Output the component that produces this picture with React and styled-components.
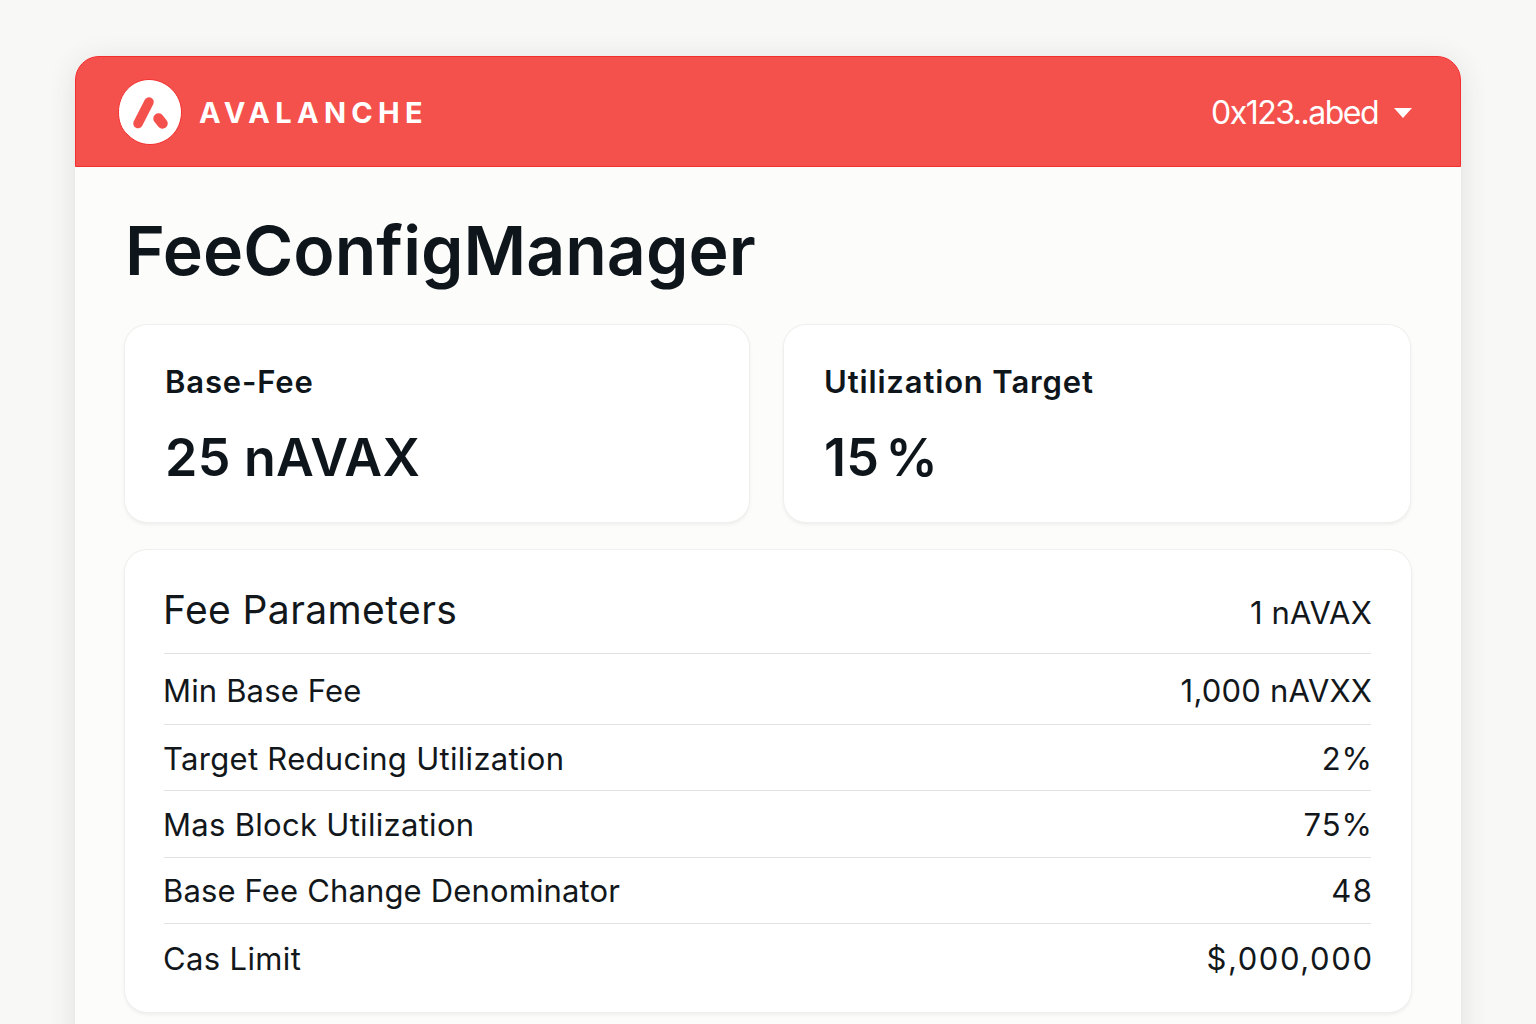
import styled, { createGlobalStyle } from 'styled-components';

const GlobalStyle = createGlobalStyle`
  html, body {
    margin: 0;
    height: 1024px;
    overflow: hidden;
    background: #f8f8f6;
    font-family: Inter, "Liberation Sans", sans-serif;
    color: #0f161b;
  }
`;

const Page = styled.div`
  padding: 56px 75px 0;
  height: 1024px;
  box-sizing: border-box;
  overflow: hidden;
`;
const Shell = styled.main`
  background: #fcfcfb;
  border-radius: 24px 24px 0 0;
  box-shadow: 0 4px 28px rgba(60, 60, 60, 0.13);
  height: 1100px;
`;
const Header = styled.header`
  height: 111px;
  box-sizing: border-box;
  background: #f4514c;
  border: 1px solid #f42f2f;
  border-radius: 24px 24px 0 0;
  display: flex;
  align-items: center;
  justify-content: space-between;
  padding: 0 48px 0 42px;
`;
const Brand = styled.div`
  display: flex;
  align-items: center;
  gap: 17px;
`;
const BrandName = styled.span`
  color: #fff;
  font-size: 29px;
  font-weight: 700;
  letter-spacing: 5.3px;
  padding-top: 2px;
`;
const Wallet = styled.div`
  display: flex;
  align-items: center;
  gap: 16px;
  color: #fff;
  font-size: 32px;
  letter-spacing: -1.5px;
  padding-top: 2px;
`;
const Caret = styled.span`
  width: 0;
  height: 0;
  border-left: 9px solid transparent;
  border-right: 9px solid transparent;
  border-top: 10px solid #fff;
`;
const Content = styled.div`
  padding: 41px 50px 0;
`;
const Title = styled.h1`
  margin: 0 0 33px;
  font-size: 68px;
  line-height: 84px;
  font-weight: 600;
  letter-spacing: 0;
`;
const Stats = styled.div`
  display: grid;
  grid-template-columns: 624px 626px;
  gap: 35px;
  margin-bottom: 28px;
`;
const Card = styled.section`
  background: #fff;
  border-radius: 22px;
  box-shadow: 0 0 0 1px #efefee, 0 2px 4px rgba(0, 0, 0, 0.08);
`;
const StatCard = styled(Card)`
  height: 197px;
  box-sizing: border-box;
  padding: 36px 40px 0;
`;
const StatLabel = styled.div`
  font-size: 31px;
  line-height: 42px;
  font-weight: 600;
  letter-spacing: 0.85px;
  margin-bottom: 24px;
`;
const StatValue = styled.div`
  font-size: 52px;
  line-height: 62px;
  font-weight: 600;
  letter-spacing: 0.25px;
  word-spacing: ${(p) => (p.$tight ? '-7px' : '0')};
`;
const Panel = styled(Card)`
  height: 462px;
  box-sizing: border-box;
  padding: 0 40px 0 39px;
`;
const Row = styled.div`
  display: flex;
  align-items: center;
  justify-content: space-between;
  height: ${(p) => p.$height}px;
  box-sizing: border-box;
  padding-top: ${(p) => p.$top || 0}px;
  border-bottom: ${(p) => (p.$last ? 'none' : '1px solid #e2e2e2')};
  font-size: 31px;
  color: #12171b;
`;
const HeadLabel = styled.span`
  font-size: 39px;
  letter-spacing: 0.4px;
  margin-left: -1px;
`;
const HeadValue = styled.span`
  font-size: 31px;
  letter-spacing: 0.2px;
  padding-top: 6px;
  margin-right: -1px;
`;
const RowLabel = styled.span`
  margin-left: -1px;
  letter-spacing: ${(p) => p.$track}px;
`;
const RowValue = styled.span`
  letter-spacing: ${(p) => p.$track}px;
  margin-right: ${(p) => -1 - p.$track}px;
`;

const rows = [
  { label: 'Min Base Fee', value: '1,000 nAVXX', height: 71, top: 2, labelTrack: 0.15, valueTrack: 0.2 },
  { label: 'Target Reducing Utilization', value: '2%', height: 66, top: 2, labelTrack: 0.3, valueTrack: 0.8 },
  { label: 'Mas Block Utilization', value: '75%', height: 67, top: 0, labelTrack: 0.3, valueTrack: 1 },
  { label: 'Base Fee Change Denominator', value: '48', height: 66, top: 0, labelTrack: 0.15, valueTrack: 1.5 },
  { label: 'Cas Limit', value: '$,000,000', height: 68, top: 0, labelTrack: 0.35, valueTrack: 1.6 },
];

const Logo = () => (
  <svg width="64" height="66" viewBox="0 0 64 66">
    <path
      d="M31 .5C48 .5 63.5 15 63.5 33C63.5 52 49 65.5 32 65.5C23 65.5 16 62 10 56C3 50 .5 42 .5 33C.5 15 14 .5 31 .5Z"
      fill="#fff"
      stroke="#f42f2f"
      strokeWidth="1"
    />
    <path d="M31 23L20 44.5" stroke="#f4514c" strokeWidth="9.5" strokeLinecap="round" />
    <path d="M40.5 39.5L44.5 44.5" stroke="#f4514c" strokeWidth="10.5" strokeLinecap="round" />
  </svg>
);

export default function App() {
  return (
    <Page>
      <GlobalStyle />
      <Shell>
        <Header>
          <Brand>
            <Logo />
            <BrandName>AVALANCHE</BrandName>
          </Brand>
          <Wallet>
            0x123..abed
            <Caret />
          </Wallet>
        </Header>
        <Content>
          <Title>FeeConfigManager</Title>
          <Stats>
            <StatCard>
              <StatLabel>Base-Fee</StatLabel>
              <StatValue>25 nAVAX</StatValue>
            </StatCard>
            <StatCard>
              <StatLabel>Utilization Target</StatLabel>
              <StatValue $tight>15 %</StatValue>
            </StatCard>
          </Stats>
          <Panel>
            <Row $height={104} $top={16}>
              <HeadLabel>Fee Parameters</HeadLabel>
              <HeadValue>1 nAVAX</HeadValue>
            </Row>
            {rows.map((row, i) => (
              <Row key={row.label} $height={row.height} $top={row.top} $last={i === rows.length - 1}>
                <RowLabel $track={row.labelTrack}>{row.label}</RowLabel>
                <RowValue $track={row.valueTrack}>{row.value}</RowValue>
              </Row>
            ))}
          </Panel>
        </Content>
      </Shell>
    </Page>
  );
}
